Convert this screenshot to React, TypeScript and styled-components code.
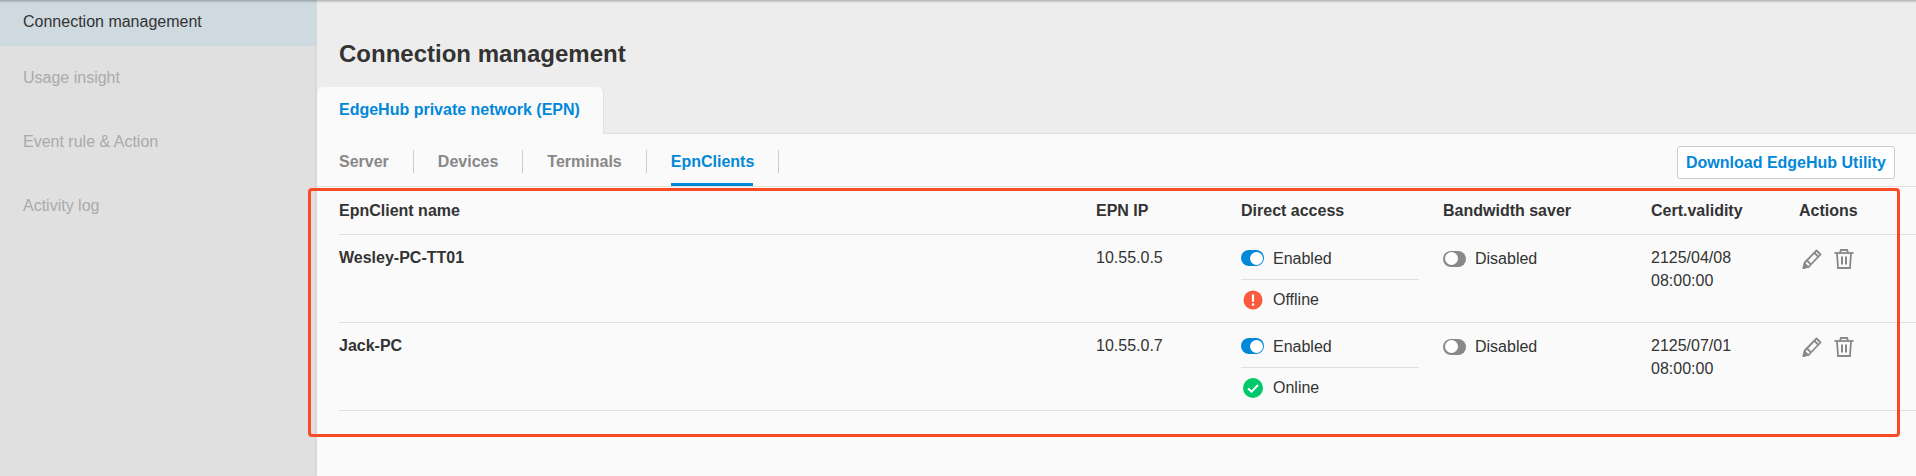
import styled, { createGlobalStyle } from "styled-components"

const GlobalStyle = createGlobalStyle`
  html, body {
    margin: 0;
    padding: 0;
    background: #fafafa;
  }
  body {
    font-family: "Liberation Sans", Arial, sans-serif;
    font-size: 16px;
    color: #333;
  }
`

const columns = "757px 145px 202px 208px 148px 1fr"

const Page = styled.div`
  display: flex;
  position: relative;
  width: 1916px;
  height: 476px;
  overflow: hidden;
`

const TopShadow = styled.div`
  position: absolute;
  top: 0;
  left: 0;
  right: 0;
  height: 3px;
  background: linear-gradient(rgba(0, 0, 0, 0.25), rgba(0, 0, 0, 0));
`

const Sidebar = styled.nav`
  flex: 0 0 317px;
  background: #e0e0e0;
  box-shadow: inset -3px 0 3px -2px rgba(0, 0, 0, 0.06);
`

const ActiveItem = styled.div`
  height: 46px;
  box-sizing: border-box;
  padding: 13px 0 0 23px;
  line-height: 18px;
  background: #cfd9e0;
  color: #333;
`

const NavItem = styled.div`
  display: flex;
  align-items: center;
  height: 64px;
  padding-left: 23px;
  color: #aaa;
`

const Main = styled.main`
  flex: 1;
  min-width: 0;
  background: #ededed;
`

const Title = styled.h1`
  margin: 0;
  height: 87px;
  box-sizing: border-box;
  padding: 40px 0 0 22px;
  font-size: 24px;
  line-height: 28px;
  font-weight: bold;
  color: #333;
`

const TabStrip = styled.div`
  display: flex;
  height: 47px;
  box-sizing: border-box;
  border-bottom: 1px solid #e0e0e0;
`

const MainTab = styled.div`
  height: 47px;
  box-sizing: border-box;
  padding: 14px 23px 0 22px;
  line-height: 18px;
  font-weight: bold;
  color: #0288d9;
  background: #fafafa;
  border-radius: 6px 6px 0 0;
  border-right: 1px solid #e0e0e0;
`

const Panel = styled.section`
  background: #fafafa;
  height: 342px;
`

const SubBar = styled.div`
  display: flex;
  align-items: flex-start;
  justify-content: space-between;
  height: 53px;
  box-sizing: border-box;
  padding: 12px 21px 0 22px;
  border-bottom: 1px solid #e0e0e0;
`

const SubTabs = styled.div`
  display: flex;
  align-items: flex-start;
  margin-top: 4px;
`

const SubTab = styled.div<{ $active?: boolean }>`
  position: relative;
  height: 24px;
  line-height: 24px;
  padding-right: 25px;
  margin-right: 24px;
  font-weight: bold;
  color: ${(props) => (props.$active ? "#0288d9" : "#888")};

  &::after {
    content: "";
    position: absolute;
    top: 0;
    right: 0;
    width: 1px;
    height: 23px;
    background: #ccc;
  }

  &::before {
    content: "";
    display: ${(props) => (props.$active ? "block" : "none")};
    position: absolute;
    left: 0;
    right: 26px;
    top: 33px;
    height: 3px;
    background: #0288d9;
  }
`

const DownloadButton = styled.button`
  height: 33px;
  padding: 0 8px;
  font: bold 16px "Liberation Sans", Arial, sans-serif;
  color: #0288d9;
  background: #fff;
  border: 1px solid #ccc;
  border-radius: 3px;
`

const HeaderRow = styled.div`
  display: grid;
  grid-template-columns: ${columns};
  height: 48px;
  box-sizing: border-box;
  margin-left: 22px;
  padding-top: 15px;
  line-height: 18px;
  font-weight: bold;
  border-bottom: 1px solid #e0e0e0;
`

const Row = styled.div`
  display: grid;
  grid-template-columns: ${columns};
  height: 88px;
  box-sizing: border-box;
  margin-left: 22px;
  padding-top: 11px;
  line-height: 23px;
  border-bottom: 1px solid #e0e0e0;
`

const NameCell = styled.div`
  font-weight: bold;
`

const AccessCell = styled.div`
  width: 178px;
`

const ToggleLine = styled.div`
  display: flex;
  align-items: center;
  gap: 9px;
  height: 25px;
`

const DividedToggleLine = styled(ToggleLine)`
  height: 34px;
  box-sizing: border-box;
  padding-bottom: 9px;
  border-bottom: 1px solid #e0e0e0;
`

const StatusBody = styled.div`
  display: flex;
  align-items: center;
  gap: 9px;
  height: 39px;
`

const Toggle = styled.span<{ $on?: boolean }>`
  display: flex;
  flex: 0 0 23px;
  justify-content: ${(props) => (props.$on ? "flex-end" : "flex-start")};
  align-items: center;
  width: 23px;
  height: 16px;
  box-sizing: border-box;
  padding: 0 1.5px;
  border-radius: 8px;
  background: ${(props) => (props.$on ? "#0288d9" : "#888")};

  &::after {
    content: "";
    width: 13px;
    height: 13px;
    border-radius: 50%;
    background: #fff;
  }
`

const IconSlot = styled.span`
  display: flex;
  flex: 0 0 23px;
  justify-content: center;
`

const Actions = styled.div`
  display: flex;
  gap: 12px;
  margin: 3px 0 0 3px;
  color: #888;
`

const Annotation = styled.div`
  position: absolute;
  left: 308px;
  top: 188px;
  width: 1592px;
  height: 249px;
  box-sizing: border-box;
  border: 3px solid #f94a26;
  border-radius: 4px;
`

const OfflineIcon = () => (
  <svg width="20" height="20" viewBox="0 0 20 20">
    <circle cx="10" cy="10" r="9.5" fill="#fa5a3e" />
    <rect x="8.9" y="4.2" width="2.2" height="7.8" rx="1" fill="#fff" />
    <circle cx="10" cy="14.6" r="1.3" fill="#fff" />
  </svg>
)

const OnlineIcon = () => (
  <svg width="20" height="20" viewBox="0 0 20 20">
    <circle cx="10" cy="10" r="10" fill="#00c96b" />
    <path d="M5 10.5 L8.6 13.6 L15 7" fill="none" stroke="#fff" strokeWidth="2" />
  </svg>
)

const PencilIcon = () => (
  <svg width="20" height="20" viewBox="0 0 20 20" fill="none" stroke="currentColor" strokeWidth="1.8">
    <path d="M14.5 1.5 L18.5 5.5 L7 17.5 L1.5 19 L2.8 13.5 Z" strokeLinejoin="round" />
    <path d="M5 11.5 L9.2 15.6 M12.5 4 L16.4 7.8" />
    <path d="M1.6 19 L2.6 14.6 L6 18 Z" fill="currentColor" />
  </svg>
)

const TrashIcon = () => (
  <svg width="20" height="20" viewBox="0 0 20 20" fill="none" stroke="currentColor" strokeWidth="1.8">
    <path d="M0.5 4 H19.5" />
    <path d="M6 4 L6.8 1 H13.2 L14 4" />
    <path d="M3 4 L4 19 H16 L17 4" />
    <path d="M8 7.5 V15.5 M12 7.5 V15.5" strokeWidth="2" />
  </svg>
)

interface Client {
  name: string
  ip: string
  online: boolean
  date: string
}

const clients: Client[] = [
  { name: "Wesley-PC-TT01", ip: "10.55.0.5", online: false, date: "2125/04/08" },
  { name: "Jack-PC", ip: "10.55.0.7", online: true, date: "2125/07/01" },
]

const App = () => (
  <>
    <GlobalStyle />
    <Page>
      <Sidebar>
        <ActiveItem>Connection management</ActiveItem>
        <NavItem>Usage insight</NavItem>
        <NavItem>Event rule &amp; Action</NavItem>
        <NavItem>Activity log</NavItem>
      </Sidebar>

      <Main>
        <Title>Connection management</Title>
        <TabStrip>
          <MainTab>EdgeHub private network (EPN)</MainTab>
        </TabStrip>

        <Panel>
          <SubBar>
            <SubTabs>
              <SubTab>Server</SubTab>
              <SubTab>Devices</SubTab>
              <SubTab>Terminals</SubTab>
              <SubTab $active>EpnClients</SubTab>
            </SubTabs>
            <DownloadButton>Download EdgeHub Utility</DownloadButton>
          </SubBar>

          <HeaderRow>
            <div>EpnClient name</div>
            <div>EPN IP</div>
            <div>Direct access</div>
            <div>Bandwidth saver</div>
            <div>Cert.validity</div>
            <div>Actions</div>
          </HeaderRow>

          {clients.map((client) => (
            <Row key={client.name}>
              <NameCell>{client.name}</NameCell>
              <div>{client.ip}</div>
              <AccessCell>
                <DividedToggleLine>
                  <Toggle $on />
                  Enabled
                </DividedToggleLine>
                <StatusBody>
                  <IconSlot>{client.online ? <OnlineIcon /> : <OfflineIcon />}</IconSlot>
                  {client.online ? "Online" : "Offline"}
                </StatusBody>
              </AccessCell>
              <div>
                <ToggleLine>
                  <Toggle />
                  Disabled
                </ToggleLine>
              </div>
              <div>
                {client.date}
                <br />
                08:00:00
              </div>
              <Actions>
                <PencilIcon />
                <TrashIcon />
              </Actions>
            </Row>
          ))}
        </Panel>
      </Main>

      <TopShadow />
      <Annotation />
    </Page>
  </>
)

export default App
